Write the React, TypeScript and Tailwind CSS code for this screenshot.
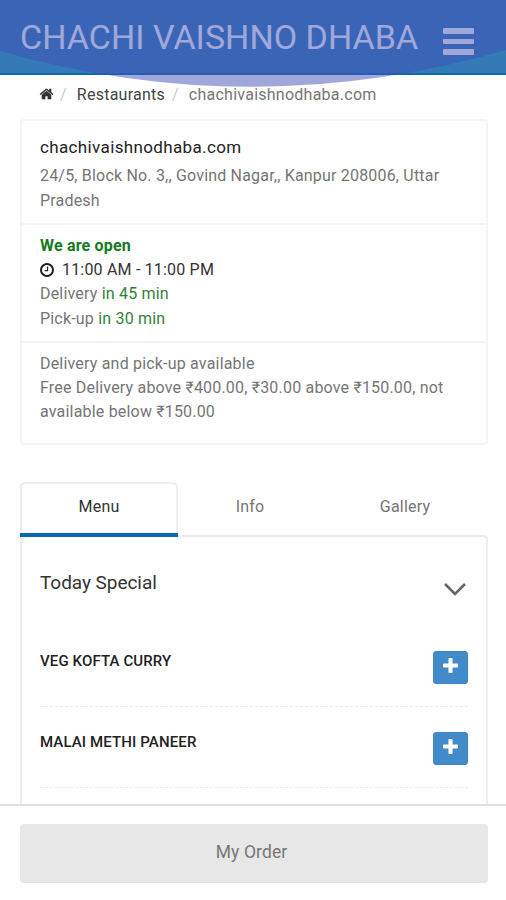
const HomeIcon = ({ className }: { className?: string }) => (
  <svg viewBox="0 253 1792 1283" fill="currentColor" className={className}>
    <path d="M1472 992v480q0 26-19 45t-45 19h-384v-384h-256v384h-384q-26 0-45-19t-19-45v-480q0-1 .5-3t.5-3l575-474 575 474q1 2 1 6zm223-69l-62 74q-8 9-21 11h-3q-13 0-21-7l-692-577-692 577q-12 8-24 7-13-2-21-11l-62-74q-8-10-7-23.5t11-21.5l719-599q32-26 76-26t76 26l244 204v-195q0-14 9-23t23-9h192q14 0 23 9t9 23v408l219 182q10 8 11 21.5t-7 23.5z" />
  </svg>
);

const ClockIcon = ({ className }: { className?: string }) => (
  <svg viewBox="0 128 1536 1536" fill="currentColor" className={className}>
    <path d="M896 544v448q0 14-9 23t-23 9h-320q-14 0-23-9t-9-23v-64q0-14 9-23t23-9h224v-352q0-14 9-23t23-9h64q14 0 23 9t9 23zm416 352q0-148-73-273t-198-198-273-73-273 73-198 198-73 273 73 273 198 198 273 73 273-73 198-198 73-273zm224 0q0 209-103 385.5t-279.5 279.5-385.5 103-385.5-103-279.5-279.5-103-385.5 103-385.5 279.5-279.5 385.5-103 385.5 103 279.5 279.5 103 385.5z" />
  </svg>
);

const PlusIcon = ({ className }: { className?: string }) => (
  <svg viewBox="192 128 1408 1408" fill="currentColor" className={className}>
    <path d="M1600 736v192q0 40-28 68t-68 28h-416v416q0 40-28 68t-68 28h-192q-40 0-68-28t-28-68v-416h-416q-40 0-68-28t-28-68v-192q0-40 28-68t68-28h416v-416q0-40 28-68t68-28h192q40 0 68 28t28 68v416h416q40 0 68 28t28 68z" />
  </svg>
);

const dishes = ["VEG KOFTA CURRY", "MALAI METHI PANEER"];

export default function App() {
  return (
    <main className="relative flex h-[900px] w-[506px] flex-col overflow-hidden bg-white font-['Roboto','Liberation_Sans',sans-serif] text-base tracking-[0.19px] text-[#757575]">
      <header className="flex h-[75px] shrink-0 items-start justify-between border-b-2 border-[#0a6ab0] bg-[#337ab7] pr-8 pl-5 text-white">
        <h1 className="mt-[14px] text-[34px] leading-[46px] font-normal tracking-[0.03px] whitespace-nowrap">
          CHACHI VAISHNO DHABA
        </h1>
        <button className="mt-[28px] flex w-[31px] flex-col gap-[5px]">
          <span className="h-[5.5px] rounded-[1px] bg-white" />
          <span className="h-[5.5px] rounded-[1px] bg-white" />
          <span className="h-[5.5px] rounded-[1px] bg-white" />
        </button>
      </header>

      {/* overscroll glow */}
      <svg
        viewBox="0 0 506 90"
        className="pointer-events-none absolute top-0 left-0 h-[90px] w-[506px]"
      >
        <path d="M0 0H506V50Q253 123 0 51Z" fill="#4150b5" fillOpacity=".5" />
      </svg>

      <nav className="flex h-[44px] shrink-0 items-start pt-2 pl-[39px] leading-6">
        <HomeIcon className="mt-[5px] h-[12px] w-[15px] text-[#333]" />
        <span className="ml-[6px] text-[#ccc]">/</span>
        <span className="ml-[10px] tracking-[0.25px] text-[#444]">Restaurants</span>
        <span className="ml-[7px] text-[#ccc]">/</span>
        <span className="ml-[10px] tracking-[0.25px]">chachivaishnodhaba.com</span>
      </nav>

      <section className="mr-[18px] ml-5 flex h-[326px] shrink-0 flex-col rounded-[4px] border-2 border-[#f5f5f5]">
        <div className="h-[102px] pt-[12px] pl-[18px]">
          <h2 className="mb-[2px] text-[17px] leading-7 tracking-[0.36px] text-[#222]">
            chachivaishnodhaba.com
          </h2>
          <p className="leading-[25px]">
            24/5, Block No. 3,, Govind Nagar,, Kanpur 208006, Uttar
            <br />
            Pradesh
          </p>
        </div>
        <div className="h-[118px] border-t-2 border-[#f5f5f5] pt-[9px] pl-[18px] leading-[24.2px]">
          <p className="font-bold text-[#147a1c]">We are open</p>
          <p className="flex items-center text-[#333]">
            <ClockIcon className="mr-[8px] h-[14px] w-[14px] text-[#222]" />
            11:00 AM - 11:00 PM
          </p>
          <p>
            Delivery <span className="text-[#33803b]">in 45 min</span>
          </p>
          <p>
            Pick-up <span className="text-[#33803b]">in 30 min</span>
          </p>
        </div>
        <div className="grow border-t-2 border-[#f5f5f5] pt-[9px] pl-[18px] leading-6">
          <p>Delivery and pick-up available</p>
          <p>Free Delivery above ₹400.00, ₹30.00 above ₹150.00, not</p>
          <p>available below ₹150.00</p>
        </div>
      </section>

      <div className="mr-[18px] ml-5 mt-[37px] flex h-[55px] shrink-0 items-stretch text-center leading-[47px]">
        <div className="w-[158px] rounded-t-[5px] border-x-2 border-t-2 border-[#ededed] text-[#333]">
          <div className="h-[49px] leading-[45px]">Menu</div>
          <div className="-mx-[2px] h-[4px] bg-[#0a6ab0]" />
        </div>
        <div className="w-[144px] pt-px">Info</div>
        <div className="grow pt-px">Gallery</div>
      </div>

      <section className="mr-[18px] ml-5 flex grow flex-col">
        <div className="-mt-[2px] ml-[158px] h-[6px] shrink-0 rounded-tr-[4px] border-t-2 border-r-2 border-[#ededed]" />
        <div className="-mt-[4px] flex grow flex-col overflow-hidden border-l-2 border-[#ededed]">
          <div className="mt-[4px] flex grow flex-col border-r-2 border-[#ededed] px-[18px]">
            <div className="flex h-[85px] shrink-0 items-start justify-between pt-[27px] text-[19px] leading-[30px] tracking-[-0.05px] text-[#333]">
              <h3>Today Special</h3>
              <svg
                viewBox="0 0 22 13"
                fill="none"
                stroke="#666"
                strokeWidth="2.6"
                className="mt-[15px] mr-[2px] h-[13px] w-[22px]"
              >
                <path d="M1 1l10 10L21 1" />
              </svg>
            </div>
            {dishes.map((dish) => (
              <div
                key={dish}
                className="flex h-[81px] shrink-0 items-start justify-between border-b border-dashed border-[#ebebeb] pt-[25px]"
              >
                <h4 className="text-[15px] leading-5 font-medium tracking-[0.12px] text-[#222]">
                  {dish}
                </h4>
                <button className="flex h-[33px] w-[35px] justify-center rounded-[3px] border border-[#3b86c6] bg-[#428bca] pt-[6px] text-white">
                  <PlusIcon className="h-[15px] w-[15px]" />
                </button>
              </div>
            ))}
          </div>
        </div>
      </section>

      <footer className="h-[96px] shrink-0 border-t-2 border-[#e0e0e0] pt-[18px] pr-[18px] pl-5">
        <button className="h-[59px] w-full rounded-[4px] bg-[#e7e7e7] pr-[5px] pb-[2px] text-[17.5px] tracking-[0.1px] text-[#777]">
          My Order
        </button>
      </footer>
    </main>
  );
}
